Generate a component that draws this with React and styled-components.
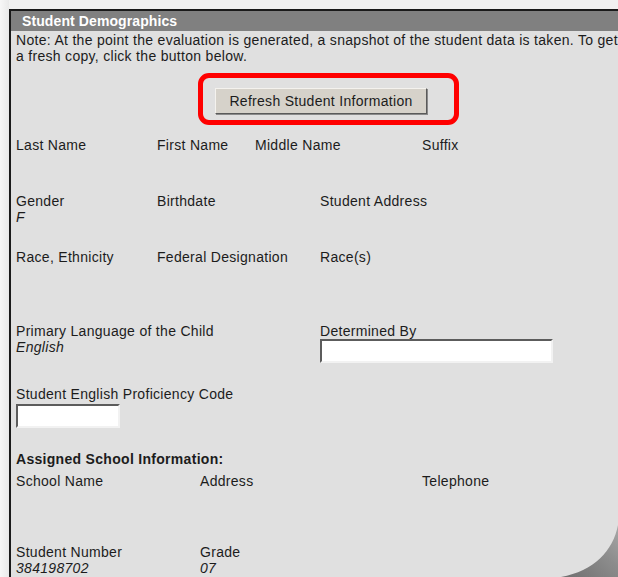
import React from 'react';
import styled, { createGlobalStyle } from 'styled-components';

const GlobalStyle = createGlobalStyle`
  html, body {
    margin: 0;
    padding: 0;
    background: #f1f1f1;
    overflow: hidden;
  }
  body {
    font-family: 'Liberation Sans', Arial, sans-serif;
    font-size: 14px;
    letter-spacing: 0.3px;
    color: #1c1c1c;
  }
`;

const Page = styled.div`
  position: relative;
  width: 618px;
  height: 577px;
  overflow: hidden;
  background: linear-gradient(90deg, #f7f7f7 0%, #e9e9e9 9px, #f1f1f1 9px);
`;

const Panel = styled.div`
  margin: 9px 0 0 9px;
  width: 620px;
  height: 600px;
  border-top: 2px solid #1a1a1a;
  border-left: 2px solid #1a1a1a;
  background: #e0e0e0;
`;

const TitleBar = styled.div`
  height: 20px;
  line-height: 20px;
  padding-left: 11px;
  background: #808080;
  color: #fff;
  font-weight: bold;
  letter-spacing: 0.1px;
`;

const Body = styled.div`
  padding: 1px 5px 0;
  line-height: 16px;
`;

const Note = styled.p`
  margin: 0;
  white-space: nowrap;
`;

const ButtonRow = styled.div`
  display: flex;
  justify-content: center;
  margin-top: 24px;
`;

const ButtonWrap = styled.div`
  position: relative;
`;

const RefreshButton = styled.button`
  width: 212px;
  height: 26px;
  padding: 0;
  font-family: inherit;
  font-size: 14px;
  letter-spacing: 0.3px;
  color: #1c1c1c;
  background: #d6d2ca;
  border: 1px solid;
  border-color: #f4f2ee #5a5a5a #5a5a5a #f4f2ee;
  box-shadow: 1px 1px 0 #8a8a8a;
`;

// red callout drawn around the button
const Callout = styled.div`
  position: absolute;
  left: -17px;
  top: -15px;
  width: 261px;
  height: 52px;
  box-sizing: border-box;
  border: 5px solid #ff0000;
  border-radius: 11px;
  pointer-events: none;
`;

const Row = styled.div`
  display: grid;
  grid-template-columns: ${(p) => p.$cols};
  height: ${(p) => p.$h}px;
  margin-top: ${(p) => p.$top || 0}px;
`;

const Field = styled.div`
  display: flex;
  flex-direction: column;
  align-items: flex-start;
`;

const Label = styled.span`
  white-space: nowrap;
`;

const Value = styled.span`
  font-style: italic;
`;

const TextInput = styled.input`
  box-sizing: border-box;
  width: ${(p) => p.$w}px;
  height: 24px;
  margin: ${(p) => p.$gap || 0}px 0 0;
  padding: 0 2px;
  background: #fff;
  border: 2px solid;
  border-color: #5c5c5c #f2f2f2 #f2f2f2 #5c5c5c;
  font-family: inherit;
  font-size: 14px;
`;

const SectionHeading = styled.div`
  height: 22px;
  font-weight: bold;
`;

const Curl = styled.svg`
  position: absolute;
  right: 0;
  bottom: 0;
`;

function PageCurl() {
  return (
    <Curl width="60" height="52" viewBox="0 0 60 52">
      <defs>
        <linearGradient id="curlShade" x1="0" y1="1" x2="1" y2="0">
          <stop offset="0" stopColor="#6f6f6f" />
          <stop offset="0.6" stopColor="#8c8c8c" />
          <stop offset="1" stopColor="#a8a8a8" />
        </linearGradient>
      </defs>
      <path d="M60 0 C55 26 36 46 3 52 L60 52 Z" fill="url(#curlShade)" />
    </Curl>
  );
}

export default function App() {
  return (
    <Page>
      <GlobalStyle />
      <Panel>
        <TitleBar>Student Demographics</TitleBar>
        <Body>
          <Note>
            Note: At the point the evaluation is generated, a snapshot of the student data is taken. To get
          </Note>
          <Note>a fresh copy, click the button below.</Note>

          <ButtonRow>
            <ButtonWrap>
              <RefreshButton type="button">Refresh Student Information</RefreshButton>
              <Callout />
            </ButtonWrap>
          </ButtonRow>

          <Row $cols="141px 98px 167px 1fr" $h={56} $top={23}>
            <Label>Last Name</Label>
            <Label>First Name</Label>
            <Label>Middle Name</Label>
            <Label>Suffix</Label>
          </Row>

          <Row $cols="141px 163px 1fr" $h={56}>
            <Field>
              <Label>Gender</Label>
              <Value>F</Value>
            </Field>
            <Label>Birthdate</Label>
            <Label>Student Address</Label>
          </Row>

          <Row $cols="141px 163px 1fr" $h={74}>
            <Label>Race, Ethnicity</Label>
            <Label>Federal Designation</Label>
            <Label>Race(s)</Label>
          </Row>

          <Row $cols="304px 1fr" $h={63}>
            <Field>
              <Label>Primary Language of the Child</Label>
              <Value>English</Value>
            </Field>
            <Field>
              <Label>Determined By</Label>
              <TextInput type="text" $w={233} />
            </Field>
          </Row>

          <Row $cols="1fr" $h={65}>
            <Field>
              <Label>Student English Proficiency Code</Label>
              <TextInput type="text" $w={104} $gap={2} />
            </Field>
          </Row>

          <SectionHeading>Assigned School Information:</SectionHeading>

          <Row $cols="184px 222px 1fr" $h={71}>
            <Label>School Name</Label>
            <Label>Address</Label>
            <Label>Telephone</Label>
          </Row>

          <Row $cols="184px 1fr" $h={40}>
            <Field>
              <Label>Student Number</Label>
              <Value>384198702</Value>
            </Field>
            <Field>
              <Label>Grade</Label>
              <Value>07</Value>
            </Field>
          </Row>
        </Body>
      </Panel>
      <PageCurl />
    </Page>
  );
}
